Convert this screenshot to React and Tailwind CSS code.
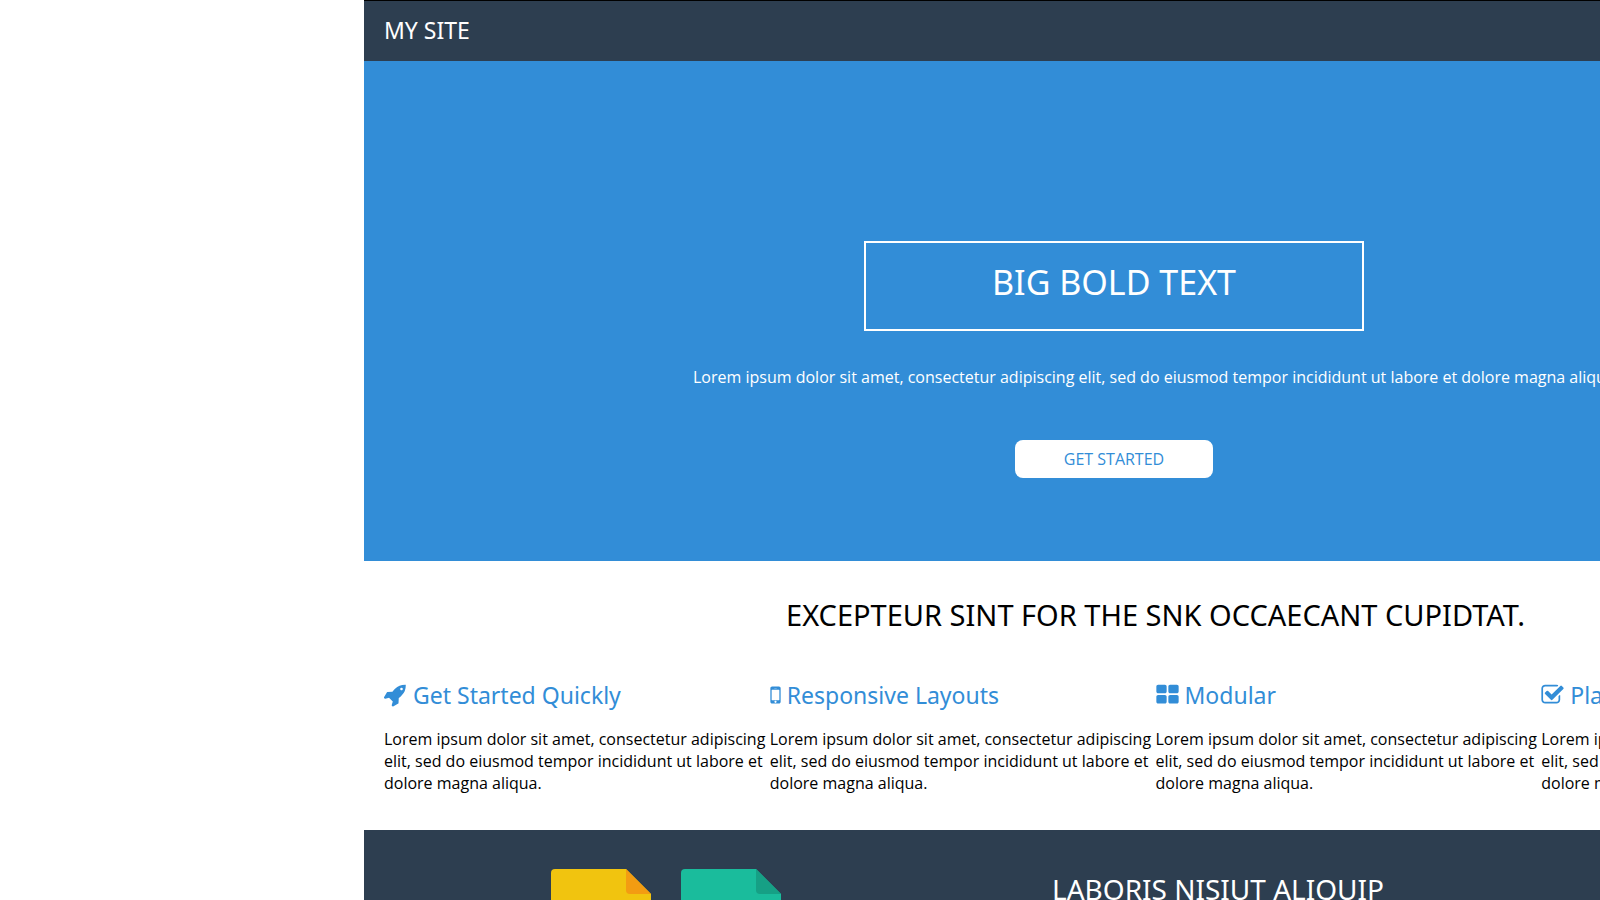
const LOREM =
  "Lorem ipsum dolor sit amet, consectetur adipiscing elit, sed do eiusmod tempor incididunt ut labore et dolore magna aliqua.";

const FEATURES = [
  {
    title: "Get Started Quickly",
    viewBox: "64 0 1664 1792",
    iconClass: "h-6 w-[23px]",
    path: "M1440 448q0-40-28-68t-68-28-68 28-28 68 28 68 68 28 68-28 28-68zm224-288q0 249-75.500 430.500t-253.500 360.500q-81 80-195 176l-20 379q-2 16-16 26l-384 224q-7 4-16 4-12 0-23-9l-64-64q-13-14-8-32l85-276-281-281-276 85q-3 1-9 1-14 0-23-9l-64-64q-17-19-5-39l224-384q10-14 26-16l379-20q96-114 176-195 188-187 358-258t431-71q14 0 24 9.500t10 22.500z",
  },
  {
    title: "Responsive Layouts",
    viewBox: "512 0 768 1792",
    iconClass: "h-6 w-[11px]",
    path: "M976 1408q0-33-23.500-56.500t-56.500-23.500-56.500 23.500-23.500 56.500 23.500 56.500 56.500 23.500 56.500-23.500 23.500-56.500zm208-160v-704q0-13-9.500-22.500t-22.500-9.500h-512q-13 0-22.500 9.500t-9.500 22.500v704q0 13 9.500 22.500t22.500 9.500h512q13 0 22.500-9.500t9.500-22.500zm-192-848q0-16-16-16h-160q-16 0-16 16t16 16h160q16 0 16-16zm288-16v1024q0 52-38 90t-90 38h-512q-52 0-90-38t-38-90v-1024q0-52 38-90t90-38h512q52 0 90 38t38 90z",
  },
  {
    title: "Modular",
    viewBox: "64 0 1664 1792",
    iconClass: "h-6 w-[23px]",
    path: "M832 1024v384q0 52-38 90t-90 38h-512q-52 0-90-38t-38-90v-384q0-52 38-90t90-38h512q52 0 90 38t38 90zm0-768v384q0 52-38 90t-90 38h-512q-52 0-90-38t-38-90v-384q0-52 38-90t90-38h512q52 0 90 38t38 90zm896 768v384q0 52-38 90t-90 38h-512q-52 0-90-38t-38-90v-384q0-52 38-90t90-38h512q52 0 90 38t38 90zm0-768v384q0 52-38 90t-90 38h-512q-52 0-90-38t-38-90v-384q0-52 38-90t90-38h512q52 0 90 38t38 90z",
  },
  {
    title: "Platform Ready",
    viewBox: "64 0 1664 1792",
    iconClass: "h-6 w-[23px]",
    path: "M1472 930v318q0 119-84.500 203.500t-203.500 84.500h-832q-119 0-203.500-84.500t-84.500-203.500v-832q0-119 84.500-203.500t203.500-84.500h832q63 0 117 25 15 7 18 23 3 17-9 29l-49 49q-10 10-23 10-3 0-9-2-23-6-45-6h-832q-66 0-113 47t-47 113v832q0 66 47 113t113 47h832q66 0 113-47t47-113v-254q0-13 9-22l64-64q10-10 23-10 6 0 12 3 20 8 20 29zm231-489l-814 814q-24 24-57 24t-57-24l-430-430q-24-24-24-57t24-57l110-110q24-24 57-24t57 24l263 263 647-647q24-24 57-24t57 24l110 110q24 24 24 57t-24 57z",
  },
];

function Feature({ title, viewBox, iconClass, path }) {
  return (
    <article>
      <h3 className="flex items-center gap-1.5 text-[23px] leading-8 text-[#328dd7]">
        <svg className={iconClass} viewBox={viewBox} fill="currentColor" aria-hidden="true">
          <path d={path} />
        </svg>
        {title}
      </h3>
      <p className="mt-[17px] font-['Open_Sans',sans-serif] text-base leading-[22px]">{LOREM}</p>
    </article>
  );
}

function Sheet({ body, fold }) {
  return (
    <svg className="h-[130px] w-[100px]" viewBox="0 0 100 130" aria-hidden="true">
      <path d="M4 0H75L100 25V126a4 4 0 0 1-4 4H4a4 4 0 0 1-4-4V4a4 4 0 0 1 4-4z" fill={body} />
      <path d="M75 0L100 25H79a4 4 0 0 1-4-4z" fill={fold} />
    </svg>
  );
}

export default function App() {
  return (
    <div className="h-screen overflow-hidden bg-white pl-[364px] font-['Noto_Sans',sans-serif] text-black">
      <div className="w-[1500px]">
        <header className="border-t border-black bg-[#2d3e50] px-5 pt-[13px] pb-[15px] text-white">
          <a href="#top" className="block text-[23px] leading-8">MY SITE</a>
        </header>

        <main>
          <section className="flex h-[500px] flex-col items-center bg-[#328dd7] pt-[180px] text-white">
            <h1 className="flex h-[90px] w-[500px] justify-center border-2 border-white pt-[15px] text-[34px] leading-[48px]">
              BIG BOLD TEXT
            </h1>
            <p className="mt-[35px] w-[1544px] self-start pl-10 text-center font-['Open_Sans',sans-serif] text-base leading-[22px] whitespace-nowrap">{LOREM}</p>
            <button type="button" className="mt-[52px] h-[38px] w-[198px] rounded-lg bg-white font-['Open_Sans',sans-serif] text-base text-[#328dd7]">
              GET STARTED
            </button>
          </section>

          <section className="w-[1564px] px-5 pt-8 pb-9">
            <div className="w-[1543px]">
              <h2 className="text-center text-[29px] leading-[44px]">EXCEPTEUR SINT FOR THE SNK OCCAECANT CUPIDTAT.</h2>
              <div className="mt-[42px] grid grid-cols-4">
                {FEATURES.map((feature) => (
                  <Feature key={feature.title} {...feature} />
                ))}
              </div>
            </div>
          </section>

          <section className="flex bg-[#2d3e50] pt-[39px] pb-10 pl-[187px] text-white">
            <div className="flex w-[501px] gap-[30px]">
              <Sheet body="#f1c40f" fold="#f39c12" />
              <Sheet body="#1abc9c" fold="#16a085" />
            </div>
            <h2 className="text-[28px] leading-10">LABORIS NISIUT ALIQUIP</h2>
          </section>
        </main>
      </div>
    </div>
  );
}
